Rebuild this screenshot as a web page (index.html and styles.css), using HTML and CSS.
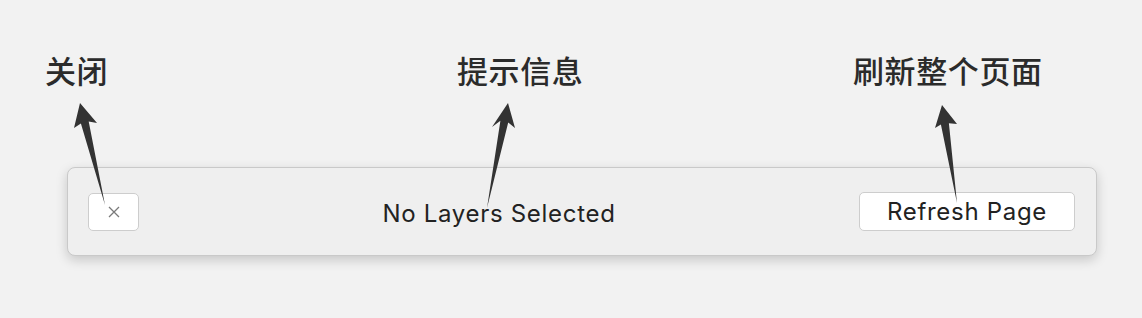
FILE: index.html
```html
<!DOCTYPE html>
<html lang="zh">
<head>
<meta charset="utf-8">
<title>Toolbar annotations</title>
<link rel="stylesheet" href="styles.css">
</head>
<body>
<div class="page">
  <div class="labels">
    <span class="label">关闭</span>
    <span class="label">提示信息</span>
    <span class="label">刷新整个页面</span>
  </div>
  <div class="panel">
    <button class="btn close-btn" aria-label="close">
      <svg width="12" height="12" viewBox="0 0 12 12"><path d="M1 1 L11 11 M11 1 L1 11" stroke="#7a7a7a" stroke-width="1.3" fill="none"/></svg>
    </button>
    <div class="message">No Layers Selected</div>
    <button class="btn refresh-btn">Refresh Page</button>
  </div>
  <svg class="arrows" width="1142" height="318" viewBox="0 0 1142 318">
    <polygon points="80,103 97,123 88.7,121.4 105,205 80.9,123.4 74,128" fill="#333"/>
    <polygon points="508,103 515,128 508.2,122.4 487,208 500.4,120.8 492,127" fill="#333"/>
    <polygon points="942,105 957,124 948.9,123.2 957,203 940.9,124.4 935,128" fill="#333"/>
  </svg>
</div>
</body>
</html>
```
FILE: styles.css
```css
html, body {
  margin: 0;
  padding: 0;
  background: #f2f2f2;
}
.page {
  position: relative;
  width: 1142px;
  height: 318px;
  overflow: hidden;
}
.labels {
  display: grid;
  grid-template-columns: 412px 396px auto;
  padding: 49px 0 0 45px;
  height: 42px;
}
.label {
  font-family: "Noto Sans CJK SC", sans-serif;
  font-weight: 500;
  font-size: 31px;
  letter-spacing: 0.6px;
  line-height: 42px;
  color: #2b2b2b;
}
.panel {
  margin: 76px 0 0 67px;
  width: 1030px;
  height: 89px;
  box-sizing: border-box;
  border: 1px solid #c9c9c9;
  border-radius: 8px;
  background: #efefef;
  box-shadow: 0 4px 12px rgba(0,0,0,0.18);
  display: flex;
  align-items: center;
  padding: 0 21px 0 20px;
}
.btn {
  background: #fff;
  border: 1px solid #cdcdcd;
  border-radius: 5px;
  box-sizing: border-box;
  padding: 0;
  display: flex;
  align-items: center;
  justify-content: center;
  font-family: Inter, "Open Sans", sans-serif;
  color: #222;
}
.close-btn {
  width: 51px;
  height: 38px;
}
.refresh-btn {
  width: 216px;
  height: 39px;
  font-size: 24px;
  letter-spacing: 0.7px;
}
.message {
  flex: 1;
  text-align: center;
  font-family: Inter, "Open Sans", sans-serif;
  font-size: 24px;
  letter-spacing: 0.7px;
  color: #222;
  padding-top: 4px;
}
.arrows {
  position: absolute;
  left: 0;
  top: 0;
  pointer-events: none;
}
```
